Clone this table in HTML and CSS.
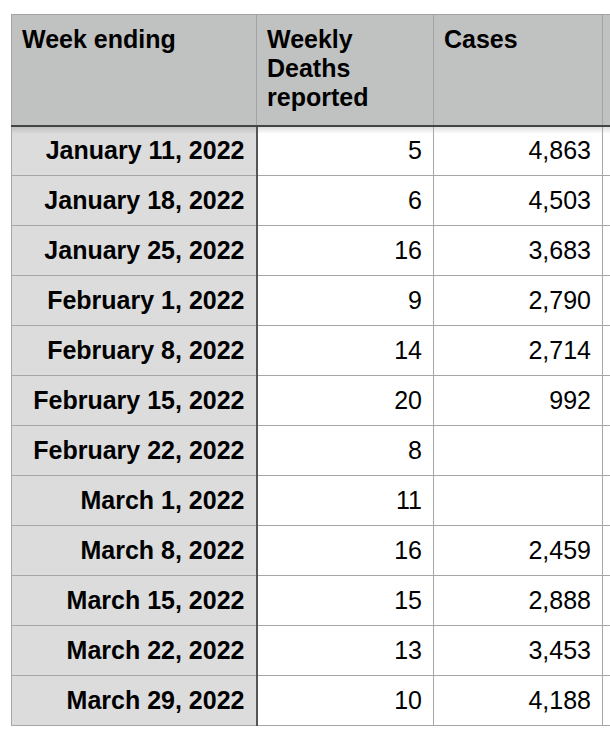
FILE: index.html
```html
<!DOCTYPE html>
<html>
<head>
<meta charset="utf-8">
<link rel="stylesheet" href="styles.css">
</head>
<body>
<div class="sheet">
<table class="grid">
  <colgroup>
    <col class="c1"><col class="c2"><col class="c3"><col class="c4">
  </colgroup>
  <thead>
    <tr>
      <th class="first">Week ending</th>
      <th>Weekly<br>Deaths<br>reported</th>
      <th>Cases</th>
      <th></th>
    </tr>
  </thead>
  <tbody>
    <tr class="top"><td class="first">January 11, 2022</td><td>5</td><td>4,863</td><td></td></tr>
    <tr><td class="first">January 18, 2022</td><td>6</td><td>4,503</td><td></td></tr>
    <tr><td class="first">January 25, 2022</td><td>16</td><td>3,683</td><td></td></tr>
    <tr><td class="first">February 1, 2022</td><td>9</td><td>2,790</td><td></td></tr>
    <tr><td class="first">February 8, 2022</td><td>14</td><td>2,714</td><td></td></tr>
    <tr><td class="first">February 15, 2022</td><td>20</td><td>992</td><td></td></tr>
    <tr><td class="first">February 22, 2022</td><td>8</td><td></td><td></td></tr>
    <tr><td class="first">March 1, 2022</td><td>11</td><td></td><td></td></tr>
    <tr><td class="first">March 8, 2022</td><td>16</td><td>2,459</td><td></td></tr>
    <tr><td class="first">March 15, 2022</td><td>15</td><td>2,888</td><td></td></tr>
    <tr><td class="first">March 22, 2022</td><td>13</td><td>3,453</td><td></td></tr>
    <tr><td class="first">March 29, 2022</td><td>10</td><td>4,188</td><td></td></tr>
  </tbody>
</table>
</div>
</body>
</html>
```
FILE: styles.css
```css
html, body {
  margin: 0;
  padding: 0;
  background: #ffffff;
  overflow: hidden;
}
.sheet {
  padding: 14px 0 0 11px;
}
.grid {
  border-collapse: collapse;
  table-layout: fixed;
  width: 600px;
  font-family: "Liberation Sans", Arial, sans-serif;
  color: #000;
}
.c1 { width: 245px; }
.c2 { width: 177px; }
.c3 { width: 169px; }
.c4 { width: 9px; }

.grid th {
  background: #c0c2c1;
  font-size: 25px;
  font-weight: bold;
  line-height: 29px;
  text-align: left;
  vertical-align: top;
  height: 111px;
  box-sizing: border-box;
  padding: 10px 10px 0 10px;
  border: 1px solid #a3a3a3;
  border-bottom: 2px solid #444;
  white-space: nowrap;
}
.grid th:last-child {
  border-right: none;
}
.grid td {
  height: 50px;
  box-sizing: border-box;
  padding: 0 11px 0 4px;
  font-size: 25px;
  text-align: right;
  vertical-align: middle;
  border: 1px solid #a6a6a6;
  background: #ffffff;
  white-space: nowrap;
}
.grid td:last-child {
  border-right: none;
}
.grid td.first {
  background: #dcdcdc;
  font-weight: bold;
  border-right: 2px solid #555;
}
.grid tr.top td {
  background-image: linear-gradient(to bottom, rgba(0,0,0,0.13), rgba(0,0,0,0) 7px);
}
```
